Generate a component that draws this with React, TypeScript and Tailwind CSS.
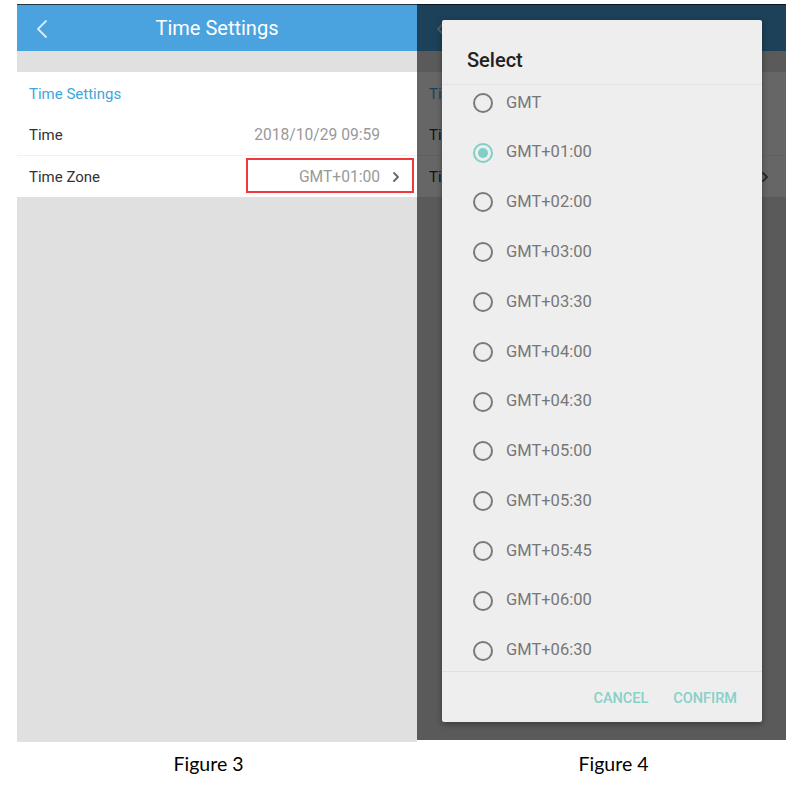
import React from "react";

const zones = [
  "GMT",
  "GMT+01:00",
  "GMT+02:00",
  "GMT+03:00",
  "GMT+03:30",
  "GMT+04:00",
  "GMT+04:30",
  "GMT+05:00",
  "GMT+05:30",
  "GMT+05:45",
  "GMT+06:00",
  "GMT+06:30",
];

function Chevron({ className }: { className?: string }) {
  return (
    <svg className={className} width="10" height="12" viewBox="0 0 10 12" fill="none">
      <path d="M3 2 L7 6 L3 10" stroke="currentColor" strokeWidth="1.8" strokeLinecap="round" strokeLinejoin="round" />
    </svg>
  );
}

function Screen({ highlight }: { highlight?: boolean }) {
  return (
    <div className="flex h-full w-full flex-col bg-[#e0e0e0]">
      <div className="relative flex h-[47px] items-center justify-center border-t border-[#243446] bg-[#4aa3df]">
        <svg className="absolute left-[19px] top-[14px]" width="12" height="20" viewBox="0 0 12 20" fill="none">
          <path d="M10 2 L2 10 L10 18" stroke="#d6ecfa" strokeWidth="1.8" strokeLinecap="round" strokeLinejoin="round" />
        </svg>
        <span className="text-[20px] leading-none text-white">Time Settings</span>
      </div>
      <div className="h-[21px]" />
      <div className="bg-white">
        <div className="flex h-[42px] items-center px-3 pt-[2px] text-[15px] text-[#3ea6dd]">Time Settings</div>
        <div className="flex h-[42px] items-center justify-between border-b border-[#f0f0f0] pl-3 pr-[37px] pt-[2px]">
          <span className="text-[15px] text-[#333]">Time</span>
          <span className="text-[15.6px] text-[#999]">2018/10/29 09:59</span>
        </div>
        <div className="relative flex h-[41px] items-center justify-between pl-3 pr-[16px] pt-[2px]">
          <span className="text-[15px] text-[#333]">Time Zone</span>
          <span className="flex items-center gap-[11px]">
            <span className="text-[15.6px] text-[#999]">GMT+01:00</span>
            <Chevron className="text-[#666]" />
          </span>
          {highlight && (
            <div className="absolute left-[229px] top-[2px] h-[35px] w-[168px] border-2 border-[#f0393c]" />
          )}
        </div>
      </div>
    </div>
  );
}

function Radio({ checked }: { checked: boolean }) {
  return checked ? (
    <span className="flex h-[20px] w-[20px] items-center justify-center rounded-full border-2 border-[#80cfc6]">
      <span className="h-[10px] w-[10px] rounded-full bg-[#80cfc6]" />
    </span>
  ) : (
    <span className="h-[20px] w-[20px] rounded-full border-2 border-[#7a7a7a]" />
  );
}

export default function App() {
  return (
    <div className="relative h-[786px] w-[798px] bg-white" style={{ fontFamily: "Roboto, 'Noto Sans', sans-serif" }}>
      <div className="flex pt-[4px]">
        <div className="ml-[17px] h-[738px] w-[400px] overflow-hidden">
          <Screen highlight />
        </div>
        <div className="relative h-[736px] w-[369px] overflow-hidden">
          <Screen />
          <div className="absolute inset-0 bg-black/60" />
          <div className="absolute left-[25px] top-[16px] flex h-[702px] w-[320px] flex-col rounded-[2px] bg-[#eeeeee] shadow-[0_2px_6px_rgba(0,0,0,0.35)]">
            <div className="h-[65px] border-b border-[#e3e3e3] pl-[25px] pt-[28px] text-[20px] font-medium leading-[24px] text-[#222]">
              Select
            </div>
            <div className="h-[587px] overflow-hidden border-b border-[#e0e0e0]">
              <div className="mt-[-7px]">
                {zones.map((z, i) => (
                  <div key={z} className="flex h-[49.8px] items-center gap-[13px] pl-[31px]">
                    <Radio checked={i === 1} />
                    <span className="text-[16.5px] text-[#777]">{z}</span>
                  </div>
                ))}
              </div>
            </div>
            <div className="flex flex-1 items-center justify-end gap-[25px] pr-[25px] pt-[3px] text-[14.5px] font-medium text-[#88d0c8]">
              <span>CANCEL</span>
              <span>CONFIRM</span>
            </div>
          </div>
        </div>
      </div>
      <div className="flex" style={{ fontFamily: "Lato, 'Open Sans', sans-serif" }}>
        <div className="w-[417px] pt-[7px] text-center text-[19.5px] text-black">
          <span>Figure 3</span>
        </div>
        <div className="w-[381px] pt-[7px] text-center text-[19.5px] text-black">
          <span className="ml-[12px]">Figure 4</span>
        </div>
      </div>
    </div>
  );
}
